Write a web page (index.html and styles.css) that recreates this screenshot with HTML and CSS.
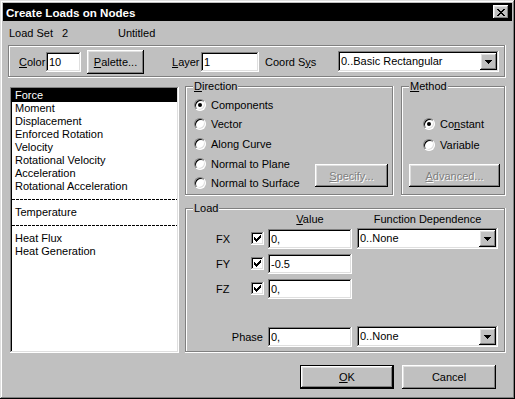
FILE: index.html
```html
<!DOCTYPE html>
<html lang="en">
<head>
  <meta charset="UTF-8">
  <title>Create Loads on Nodes</title>
  <link rel="stylesheet" href="styles.css">
</head>
<body>
  <div class="window">
    <div class="titlebar">
      <span class="title">Create Loads on Nodes</span>
      <span class="close raised">
        <svg width="8" height="7" viewBox="0 0 8 7" shape-rendering="crispEdges">
          <rect x="0" y="0" width="2" height="1"/><rect x="6" y="0" width="2" height="1"/>
          <rect x="1" y="1" width="2" height="1"/><rect x="5" y="1" width="2" height="1"/>
          <rect x="2" y="2" width="4" height="1"/>
          <rect x="3" y="3" width="2" height="1"/>
          <rect x="2" y="4" width="4" height="1"/>
          <rect x="1" y="5" width="2" height="1"/><rect x="5" y="5" width="2" height="1"/>
          <rect x="0" y="6" width="2" height="1"/><rect x="6" y="6" width="2" height="1"/>
        </svg>
      </span>
    </div>

    <div class="info">
      <span class="info-label">Load Set</span>
      <span class="info-num">2</span>
      <span>Untitled</span>
    </div>

    <div class="group toolbar">
      <span class="lbl lbl-color"><u>C</u>olor</span>
      <span class="field f-color">10</span>
      <span class="btn raised btn-palette"><span><u>P</u>alette...</span></span>
      <span class="lbl lbl-layer"><u>L</u>ayer</span>
      <span class="field f-layer">1</span>
      <span class="lbl lbl-coord">Coord S<u>y</u>s</span>
      <span class="combo c-coord">
        <span class="combo-text">0..Basic Rectangular</span>
        <span class="combo-btn raised"><svg width="7" height="4" viewBox="0 0 7 4" shape-rendering="crispEdges"><path d="M0 0h7v1h-1v1h-1v1h-1v1h-1v-1h-1v-1h-1v-1h-1z"/></svg></span>
      </span>
    </div>

    <div class="main">
      <ul class="listbox">
        <li class="sel">Force</li>
        <li>Moment</li>
        <li>Displacement</li>
        <li>Enforced Rotation</li>
        <li>Velocity</li>
        <li>Rotational Velocity</li>
        <li>Acceleration</li>
        <li>Rotational Acceleration</li>
        <li class="sep"></li>
        <li>Temperature</li>
        <li class="sep"></li>
        <li>Heat Flux</li>
        <li>Heat Generation</li>
      </ul>

      <div class="group direction">
        <span class="legend"><u>D</u>irection</span>
        <div class="opts">
          <div class="opt"><span class="radio on"></span><span>Components</span></div>
          <div class="opt"><span class="radio"></span><span>Vector</span></div>
          <div class="opt"><span class="radio"></span><span>Along Curve</span></div>
          <div class="opt"><span class="radio"></span><span>Normal to Plane</span></div>
          <div class="opt"><span class="radio"></span><span>Normal to Surface</span></div>
        </div>
        <span class="btn raised disabled btn-specify"><span><u>S</u>pecify...</span></span>
      </div>

      <div class="group method">
        <span class="legend"><u>M</u>ethod</span>
        <div class="opts">
          <div class="opt"><span class="radio on"></span><span>Co<u>n</u>stant</span></div>
          <div class="opt"><span class="radio"></span><span>Variable</span></div>
        </div>
        <span class="btn raised disabled btn-advanced"><span><u>A</u>dvanced...</span></span>
      </div>

      <div class="group load">
        <span class="legend">Load</span>
        <div class="load-grid">
          <span class="head head-value"><u>V</u>alue</span>
          <span class="head head-func">Function Dependence</span>

          <span class="comp">FX</span>
          <span class="check"><svg width="7" height="7" viewBox="0 0 7 7" shape-rendering="crispEdges"><rect x="0" y="2" width="1" height="3"/><rect x="1" y="3" width="1" height="3"/><rect x="2" y="4" width="1" height="3"/><rect x="3" y="3" width="1" height="3"/><rect x="4" y="2" width="1" height="3"/><rect x="5" y="1" width="1" height="3"/><rect x="6" y="0" width="1" height="3"/></svg></span>
          <span class="field f-value">0,</span>
          <span class="combo c-func">
            <span class="combo-text">0..None</span>
            <span class="combo-btn raised"><svg width="7" height="4" viewBox="0 0 7 4" shape-rendering="crispEdges"><path d="M0 0h7v1h-1v1h-1v1h-1v1h-1v-1h-1v-1h-1v-1h-1z"/></svg></span>
          </span>

          <span class="comp">FY</span>
          <span class="check"><svg width="7" height="7" viewBox="0 0 7 7" shape-rendering="crispEdges"><rect x="0" y="2" width="1" height="3"/><rect x="1" y="3" width="1" height="3"/><rect x="2" y="4" width="1" height="3"/><rect x="3" y="3" width="1" height="3"/><rect x="4" y="2" width="1" height="3"/><rect x="5" y="1" width="1" height="3"/><rect x="6" y="0" width="1" height="3"/></svg></span>
          <span class="field f-value">-0.5</span>
          <span></span>

          <span class="comp">FZ</span>
          <span class="check"><svg width="7" height="7" viewBox="0 0 7 7" shape-rendering="crispEdges"><rect x="0" y="2" width="1" height="3"/><rect x="1" y="3" width="1" height="3"/><rect x="2" y="4" width="1" height="3"/><rect x="3" y="3" width="1" height="3"/><rect x="4" y="2" width="1" height="3"/><rect x="5" y="1" width="1" height="3"/><rect x="6" y="0" width="1" height="3"/></svg></span>
          <span class="field f-value">0,</span>
          <span></span>

          <span class="spacer"></span>

          <span class="phase">Phase</span>
          <span class="field f-value">0,</span>
          <span class="combo c-func">
            <span class="combo-text">0..None</span>
            <span class="combo-btn raised"><svg width="7" height="4" viewBox="0 0 7 4" shape-rendering="crispEdges"><path d="M0 0h7v1h-1v1h-1v1h-1v1h-1v-1h-1v-1h-1v-1h-1z"/></svg></span>
          </span>
        </div>
      </div>
    </div>

    <div class="footer">
      <span class="btn raised default btn-dlg"><span><u>O</u>K</span></span>
      <span class="btn raised btn-dlg">Cancel</span>
    </div>
  </div>
</body>
</html>
```

FILE: styles.css
```css
body {
  margin: 0;
  background: #c0c0c0;
  font-family: "Liberation Sans", Arial, sans-serif;
  font-size: 11px;
  color: #000;
}

u { text-decoration-thickness: 1px; text-underline-offset: 1px; }

.window {
  width: 515px;
  height: 399px;
  box-sizing: border-box;
  padding: 3px;
  background: #c0c0c0;
  box-shadow: inset -1px -1px #000, inset 1px 1px #dfdfdf,
              inset -2px -2px #808080, inset 2px 2px #fff;
}

/* bevels */
.raised {
  box-shadow: inset -1px -1px #000, inset 1px 1px #fff,
              inset -2px -2px #808080, inset 2px 2px #dfdfdf;
}

/* title bar */
.titlebar {
  height: 18px;
  background: #000;
  color: #fff;
  display: flex;
  align-items: center;
  justify-content: space-between;
  padding: 0 3px 0 3px;
}
.title {
  font-weight: bold;
  font-size: 11.6px;
}
.close {
  width: 16px;
  height: 14px;
  background: #c0c0c0;
  display: flex;
  align-items: center;
  justify-content: center;
  padding-right: 1px;
  box-sizing: border-box;
}

/* load set row */
.info {
  height: 24px;
  display: flex;
  align-items: center;
  padding-left: 6px;
}
.info-label { width: 53px; }
.info-num { width: 56px; }

/* group boxes */
.group {
  position: relative;
  box-sizing: border-box;
  box-shadow: inset -1px -1px #fff, inset -2px -2px #808080,
              inset 1px 1px #808080, inset 2px 2px #fff;
}
.legend {
  position: absolute;
  top: -6px;
  left: 8px;
  padding: 0 1px;
  line-height: 13px;
  background: #c0c0c0;
}

/* fields, combos, buttons */
.field {
  display: block;
  box-sizing: border-box;
  height: 20px;
  line-height: 20px;
  padding-left: 3px;
  background: #fff;
  box-shadow: inset -1px -1px #fff, inset 1px 1px #808080,
              inset -2px -2px #dfdfdf, inset 2px 2px #000;
}
.combo {
  display: flex;
  box-sizing: border-box;
  height: 21px;
  padding: 2px;
  background: #fff;
  box-shadow: inset -1px -1px #fff, inset 1px 1px #808080,
              inset -2px -2px #dfdfdf, inset 2px 2px #000;
}
.combo-text {
  flex: 1;
  line-height: 17px;
  padding-left: 1px;
}
.combo-btn {
  width: 17px;
  height: 17px;
  background: #c0c0c0;
  display: flex;
  align-items: center;
  justify-content: center;
  padding-top: 1px;
  box-sizing: border-box;
}
.btn {
  display: flex;
  align-items: center;
  justify-content: center;
  box-sizing: border-box;
  background: #c0c0c0;
}
.btn.disabled {
  color: #808080;
  text-shadow: 1px 1px #fff;
}
.btn.default {
  border: 1px solid #000;
}

/* toolbar */
.toolbar {
  margin: 0 0 0 5px;
  width: 498px;
  height: 33px;
  display: flex;
  align-items: center;
  padding-left: 11px;
}
.lbl-color { width: 27px; }
.f-color { width: 35px; }
.btn-palette { width: 57px; height: 24px; margin-left: 6px; }
.lbl-layer { width: 29px; margin-left: 28px; }
.f-layer { width: 58px; }
.lbl-coord { width: 73px; margin-left: 6px; }
.c-coord { width: 161px; }

/* main area */
.main {
  display: grid;
  grid-template-columns: 175px 216px 105px;
  grid-template-rows: 110px 145px;
  row-gap: 12px;
  margin-left: 7px;
  padding-top: 8px;
}

.listbox {
  grid-row: 1 / 3;
  width: 169px;
  height: 266px;
  margin: 1px 0 0;
  padding: 2px;
  box-sizing: border-box;
  list-style: none;
  background: #fff;
  box-shadow: inset -1px -1px #fff, inset 1px 1px #808080,
              inset -2px -2px #dfdfdf, inset 2px 2px #000;
}
.listbox li {
  height: 13px;
  line-height: 13px;
  padding-left: 3px;
  white-space: nowrap;
}
.listbox li.sel {
  background: #000;
  color: #fff;
}
.listbox li.sep {
  padding: 0;
  display: flex;
  align-items: center;
}
.listbox li.sep::before {
  content: "";
  flex: 1;
  height: 1px;
  background: repeating-linear-gradient(to right, #000 0 3px, transparent 3px 4px);
}

.direction {
  width: 209px;
  display: flex;
  padding: 9px 6px 0 9px;
}
.direction .opts { flex: 1; }
.direction .opt { height: 19.6px; }
.method {
  width: 105px;
  display: flex;
  flex-direction: column;
  padding: 27px 6px 0 8px;
}
.method .opts { padding-left: 14px; }
.method .opt { height: 21px; }

.opt {
  height: 20px;
  display: flex;
  align-items: center;
  gap: 5px;
}
.radio {
  position: relative;
  width: 12px;
  height: 12px;
  border-radius: 50%;
  box-sizing: border-box;
  background: #fff;
  border: 1px solid;
  border-color: #808080 #fff #fff #808080;
  box-shadow: inset 1px 1px #000, inset -1px -1px #dfdfdf;
}
.radio.on::after {
  content: "";
  position: absolute;
  left: 3px;
  top: 3px;
  width: 4px;
  height: 4px;
  border-radius: 50%;
  background: #000;
}

.btn-specify {
  width: 73px;
  height: 23px;
  align-self: flex-end;
  margin-bottom: 9px;
}
.btn-advanced {
  width: 91px;
  height: 23px;
  margin-top: auto;
  margin-bottom: 9px;
}

/* load */
.load {
  grid-column: 2 / 4;
  width: 321px;
  padding: 4px 0 0 31px;
}
.load-grid {
  display: grid;
  grid-template-columns: 35px 17px 84px 146px;
  grid-template-rows: 14px 25px 25px 25px 23px 25px;
  align-items: center;
}
.head {
  text-align: center;
  line-height: 14px;
}
.head-value { grid-column: 3; }
.head-func { grid-column: 4; padding-left: 5px; }
.check {
  width: 13px;
  height: 13px;
  box-sizing: border-box;
  display: flex;
  align-items: center;
  justify-content: center;
  background: #fff;
  box-shadow: inset -1px -1px #fff, inset 1px 1px #808080,
              inset -2px -2px #dfdfdf, inset 2px 2px #000;
}
.f-value { width: 84px; }
.c-func { width: 141px; justify-self: end; }
.spacer { grid-column: 1 / 5; }
.phase {
  grid-column: 1 / 3;
  text-align: right;
  padding-right: 5px;
}

/* footer */
.footer {
  display: flex;
  justify-content: flex-end;
  gap: 8px;
  margin-top: 12px;
  padding-right: 16px;
}
.btn-dlg {
  width: 94px;
  height: 24px;
}
```
